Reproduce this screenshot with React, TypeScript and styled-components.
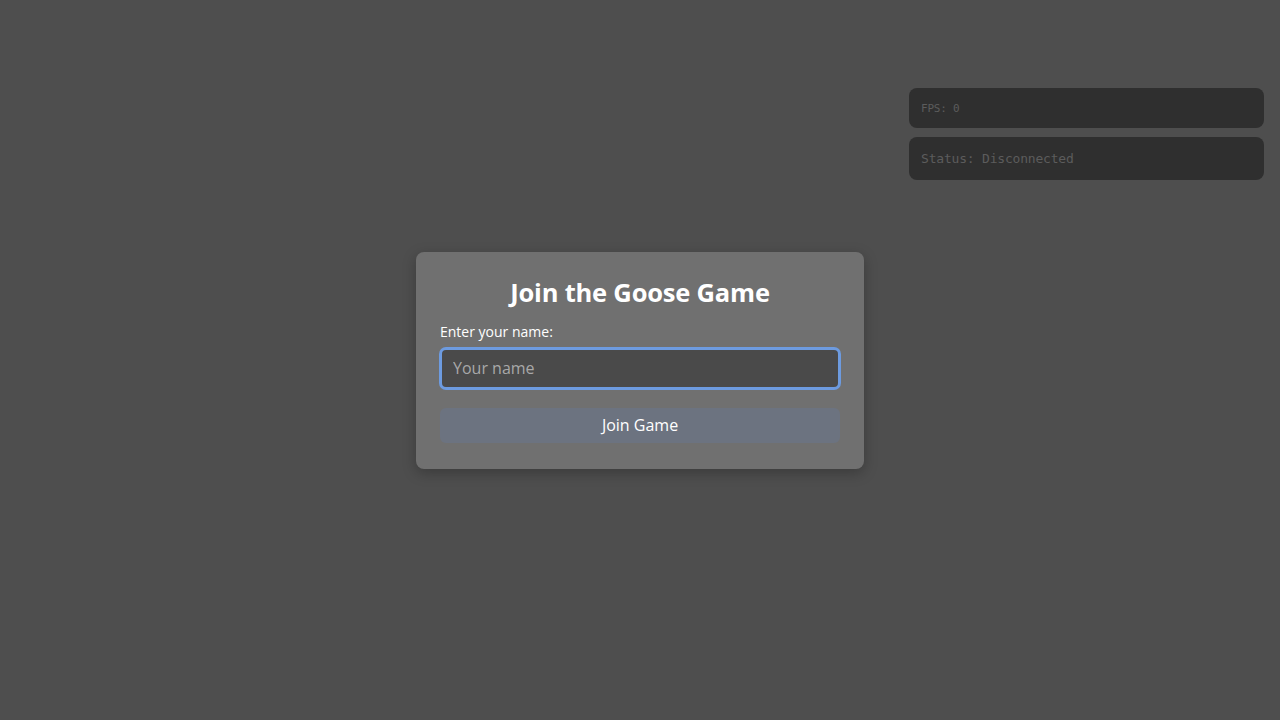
import React, { useState } from "react";
import styled, { createGlobalStyle } from "styled-components";

const GlobalStyle = createGlobalStyle`
  html, body {
    margin: 0;
    padding: 0;
    background: #4e4e4e;
    font-family: "Open Sans", "Noto Sans", sans-serif;
  }
  * { box-sizing: border-box; }
`;

const Screen = styled.div`
  position: relative;
  width: 100vw;
  height: 100vh;
  display: flex;
  align-items: center;
  justify-content: center;
  overflow: hidden;
`;

// debug readouts pinned over the game canvas
const Hud = styled.div`
  position: absolute;
  top: 88px;
  right: 16px;
  width: 355px;
  display: flex;
  flex-direction: column;
  gap: 9px;
`;

const HudPanel = styled.div<{ $size: number; $height: number }>`
  height: ${(p) => p.$height}px;
  display: flex;
  align-items: center;
  padding: 0 12px;
  background: #2f2f2f;
  border-radius: 8px;
  color: #5c5c5c;
  font-family: "DejaVu Sans Mono", "Liberation Mono", monospace;
  font-size: ${(p) => p.$size}px;
  letter-spacing: -0.2px;
`;

const Card = styled.div`
  width: 448px;
  padding: 23px 24px 26px;
  background: #707070;
  border-radius: 8px;
  box-shadow: 0 4px 14px rgba(0, 0, 0, 0.25);
  display: flex;
  flex-direction: column;
`;

const Title = styled.h2`
  margin: 0 0 14px;
  text-align: center;
  color: #ffffff;
  font-size: 25.5px;
  font-weight: 700;
  line-height: 34px;
  letter-spacing: -0.2px;
`;

const Label = styled.label`
  color: #ffffff;
  font-size: 14px;
  line-height: 18px;
  margin-bottom: 7px;
`;

const Input = styled.input`
  height: 41px;
  width: 100%;
  padding: 0 11px;
  background: #4a4a4a;
  border: 2px solid #6d9be0;
  border-radius: 6px;
  box-shadow: 0 0 0 1px #6d9be0;
  color: #ffffff;
  font-family: inherit;
  font-size: 16px;
  outline: none;
  &::placeholder {
    color: #a8a8a8;
  }
`;

const JoinButton = styled.button`
  margin-top: 19px;
  height: 35px;
  width: 100%;
  border: none;
  border-radius: 6px;
  background: #6c7380;
  color: #ffffff;
  font-family: inherit;
  font-size: 16px;
  cursor: pointer;
`;

export default function App() {
  const [name, setName] = useState("");
  return (
    <>
      <GlobalStyle />
      <Screen>
        <Hud>
          <HudPanel $size={11} $height={40}>FPS: 0</HudPanel>
          <HudPanel $size={13} $height={43}>Status: Disconnected</HudPanel>
        </Hud>
        <Card>
          <Title>Join the Goose Game</Title>
          <Label htmlFor="player-name">Enter your name:</Label>
          <Input
            id="player-name"
            placeholder="Your name"
            value={name}
            onChange={(e) => setName(e.target.value)}
          />
          <JoinButton>Join Game</JoinButton>
        </Card>
      </Screen>
    </>
  );
}
